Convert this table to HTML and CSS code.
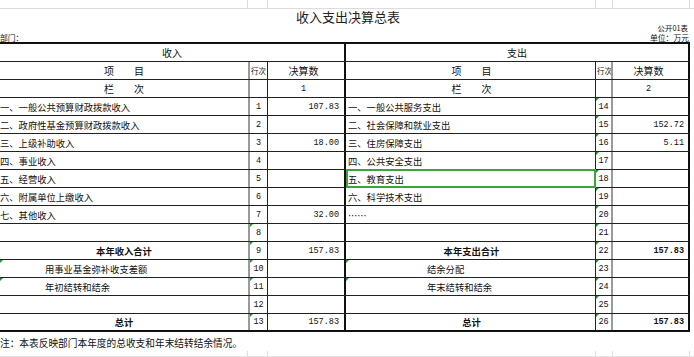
FILE: index.html
```html
<!DOCTYPE html>
<html lang="zh-CN">
<head>
<meta charset="utf-8">
<title>收入支出决算总表</title>
<link rel="stylesheet" href="styles.css">
</head>
<body>
<div class="sheet">
  <div class="strip">
    <span class="g"></span><span class="g"></span><span></span><span class="g"></span><span class="g"></span><span class="g"></span>
  </div>
  <div class="head">
    <h1 class="title">收入支出决算总表</h1>
    <div class="form-no">公开01表</div>
    <div class="meta"><span>部门：</span><span>单位：万元</span></div>
  </div>

  <div class="table">
    <div class="row">
      <div class="c sect-l center hd">收入</div>
      <div class="c sect-r center hd">支出</div>
    </div>
    <div class="row">
      <div class="c item center hd">项&emsp;&emsp;目</div>
      <div class="c no-l tiny">行次</div>
      <div class="c amt-l center hd">决算数</div>
      <div class="c item-r center hd">项&emsp;&emsp;目</div>
      <div class="c no-r tiny">行次</div>
      <div class="c amt-r center hd">决算数</div>
    </div>
    <div class="row">
      <div class="c item center hd">栏&emsp;&emsp;次</div>
      <div class="c no-l"></div>
      <div class="c amt-l center num">1</div>
      <div class="c item-r center hd">栏&emsp;&emsp;次</div>
      <div class="c no-r"></div>
      <div class="c amt-r center num">2</div>
    </div>

    <div class="row">
      <div class="c item">一、一般公共预算财政拨款收入</div>
      <div class="c no-l num">1</div>
      <div class="c amt-l num right">107.83</div>
      <div class="c item-r">一、一般公共服务支出</div>
      <div class="c no-r num mark">14</div>
      <div class="c amt-r num right"></div>
    </div>
    <div class="row">
      <div class="c item">二、政府性基金预算财政拨款收入</div>
      <div class="c no-l num">2</div>
      <div class="c amt-l num right"></div>
      <div class="c item-r">二、社会保障和就业支出</div>
      <div class="c no-r num mark">15</div>
      <div class="c amt-r num right">152.72</div>
    </div>
    <div class="row">
      <div class="c item">三、上级补助收入</div>
      <div class="c no-l num">3</div>
      <div class="c amt-l num right">18.00</div>
      <div class="c item-r">三、住房保障支出</div>
      <div class="c no-r num mark">16</div>
      <div class="c amt-r num right">5.11</div>
    </div>
    <div class="row">
      <div class="c item">四、事业收入</div>
      <div class="c no-l num">4</div>
      <div class="c amt-l num right"></div>
      <div class="c item-r">四、公共安全支出</div>
      <div class="c no-r num mark">17</div>
      <div class="c amt-r num right"></div>
    </div>
    <div class="row">
      <div class="c item">五、经营收入</div>
      <div class="c no-l num">5</div>
      <div class="c amt-l num right"></div>
      <div class="c item-r selected">五、教育支出</div>
      <div class="c no-r num mark">18</div>
      <div class="c amt-r num right"></div>
    </div>
    <div class="row">
      <div class="c item">六、附属单位上缴收入</div>
      <div class="c no-l num">6</div>
      <div class="c amt-l num right"></div>
      <div class="c item-r">六、科学技术支出</div>
      <div class="c no-r num mark">19</div>
      <div class="c amt-r num right"></div>
    </div>
    <div class="row">
      <div class="c item">七、其他收入</div>
      <div class="c no-l num">7</div>
      <div class="c amt-l num right">32.00</div>
      <div class="c item-r dots">……</div>
      <div class="c no-r num mark">20</div>
      <div class="c amt-r num right"></div>
    </div>
    <div class="row">
      <div class="c item"></div>
      <div class="c no-l num mark">8</div>
      <div class="c amt-l num right"></div>
      <div class="c item-r"></div>
      <div class="c no-r num mark">21</div>
      <div class="c amt-r num right"></div>
    </div>
    <div class="row">
      <div class="c item center bold">本年收入合计</div>
      <div class="c no-l num mark">9</div>
      <div class="c amt-l num right">157.83</div>
      <div class="c item-r center bold">本年支出合计</div>
      <div class="c no-r num mark">22</div>
      <div class="c amt-r num right bold">157.83</div>
    </div>
    <div class="row">
      <div class="c item indent-l mark">用事业基金弥补收支差额</div>
      <div class="c no-l num mark">10</div>
      <div class="c amt-l num right"></div>
      <div class="c item-r indent-r mark">结余分配</div>
      <div class="c no-r num mark">23</div>
      <div class="c amt-r num right"></div>
    </div>
    <div class="row">
      <div class="c item indent-l mark">年初结转和结余</div>
      <div class="c no-l num mark">11</div>
      <div class="c amt-l num right"></div>
      <div class="c item-r indent-r mark">年末结转和结余</div>
      <div class="c no-r num mark">24</div>
      <div class="c amt-r num right"></div>
    </div>
    <div class="row">
      <div class="c item"></div>
      <div class="c no-l num">12</div>
      <div class="c amt-l num right"></div>
      <div class="c item-r"></div>
      <div class="c no-r num mark">25</div>
      <div class="c amt-r num right"></div>
    </div>
    <div class="row last">
      <div class="c item center bold">总计</div>
      <div class="c no-l num mark">13</div>
      <div class="c amt-l num right">157.83</div>
      <div class="c item-r center bold">总计</div>
      <div class="c no-r num mark">26</div>
      <div class="c amt-r num right bold">157.83</div>
    </div>
  </div>

  <p class="note">注：本表反映部门本年度的总收支和年末结转结余情况。</p>
  <div class="strip bottom">
    <span class="g"></span><span class="g"></span><span></span><span class="g"></span><span class="g"></span><span class="g"></span>
  </div>
</div>
</body>
</html>
```

FILE: styles.css
```css
html, body {
  margin: 0;
  padding: 0;
  background: #ffffff;
}

.sheet {
  width: 694px;
  height: 357px;
  overflow: hidden;
  font-family: "Noto Sans CJK SC", "Noto Sans", sans-serif;
  color: #111111;
}

.strip {
  display: grid;
  grid-template-columns: 248px 20px 78px 250px 17px 77px;
  height: 9px;
  box-sizing: border-box;
  border-bottom: 1px solid #dcdcdc;
}

.strip .g {
  border-right: 1px solid #dcdcdc;
}

.strip.bottom {
  height: 6px;
  border-bottom: 1px solid #e2e2e2;
}

.head {
  display: flex;
  flex-direction: column;
  height: 33px;
}

.title {
  margin: 1px 0 0 0;
  height: 13px;
  line-height: 13px;
  font-size: 13px;
  font-weight: normal;
  text-align: center;
  color: #222222;
  padding-left: 2px;
}

.form-no {
  height: 10px;
  line-height: 10px;
  font-size: 7.4px;
  text-align: right;
  padding-right: 6px;
}

.meta {
  display: flex;
  justify-content: space-between;
  height: 9px;
  line-height: 9px;
  font-size: 7.8px;
  padding-right: 5px;
}

.table {
  width: 690px;
  border-top: 2px solid #111111;
}

.row {
  display: grid;
  grid-template-columns: 248px 20px 78px 250px 17px 77px;
  height: 18px;
  box-sizing: border-box;
  border-bottom: 1px solid #222222;
}

.row.last {
  border-bottom: 2px solid #111111;
}

.c {
  box-sizing: border-box;
  display: flex;
  align-items: center;
  white-space: nowrap;
  overflow: hidden;
  position: relative;
  font-size: 9.3px;
  line-height: 12px;
}

.sect-l {
  grid-column: 1 / 4;
  border-right: 2px solid #111111;
}

.sect-r {
  grid-column: 4 / 7;
  border-right: 2px solid #111111;
}

.item {
  padding-left: 0;
}

.no-l {
  border-left: 2px solid #9a9a9a;
  border-right: 1px solid #222222;
  justify-content: center;
}

.amt-l {
  border-right: 2px solid #111111;
  padding-right: 5px;
}

.item-r {
  border-right: 1px solid #222222;
  padding-left: 2px;
}

.no-r {
  border-right: 2px solid #9a9a9a;
  justify-content: center;
}

.amt-r {
  border-right: 2px solid #111111;
  padding-right: 4px;
}

.center {
  justify-content: center;
}

.right {
  justify-content: flex-end;
}

.hd {
  font-size: 10px;
}

.tiny {
  font-size: 7.5px;
  justify-content: flex-start;
  padding-left: 1px;
}

.num {
  font-family: "Liberation Mono", "DejaVu Sans Mono", monospace;
  font-size: 8.5px;
}

.bold {
  font-weight: bold;
}

.indent-l {
  padding-left: 45px;
}

.indent-r {
  padding-left: 81px;
}

.dots {
  font-size: 9.3px;
}

.mark::before {
  content: "";
  position: absolute;
  left: 0;
  top: 0;
  width: 0;
  height: 0;
  border-top: 3px solid #1f9a2a;
  border-right: 3px solid transparent;
}

.selected::after {
  content: "";
  position: absolute;
  left: 0;
  top: -1px;
  right: -1px;
  bottom: -1px;
  border: 2px solid #3aa53a;
}

.selected {
  overflow: visible;
}

.note {
  margin: 0;
  padding-top: 3px;
  height: 16px;
  line-height: 16px;
  font-size: 9.7px;
  color: #111111;
}
```
